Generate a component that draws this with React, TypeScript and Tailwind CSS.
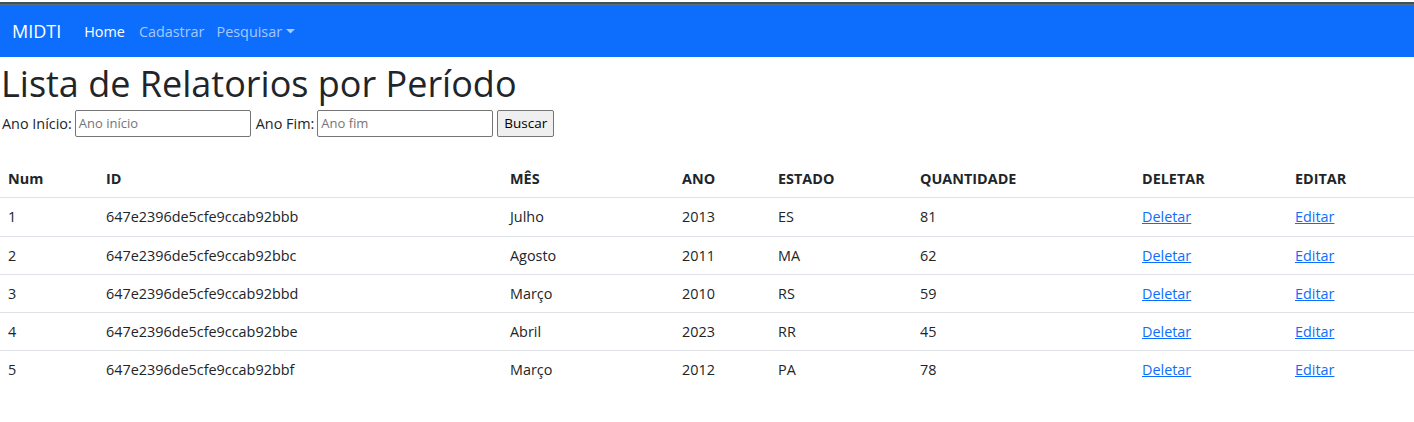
import React from "react";

const rows = [
  { n: 1, id: "647e2396de5cfe9ccab92bbb", mes: "Julho", ano: "2013", uf: "ES", q: "81" },
  { n: 2, id: "647e2396de5cfe9ccab92bbc", mes: "Agosto", ano: "2011", uf: "MA", q: "62" },
  { n: 3, id: "647e2396de5cfe9ccab92bbd", mes: "Março", ano: "2010", uf: "RS", q: "59" },
  { n: 4, id: "647e2396de5cfe9ccab92bbe", mes: "Abril", ano: "2023", uf: "RR", q: "45" },
  { n: 5, id: "647e2396de5cfe9ccab92bbf", mes: "Março", ano: "2012", uf: "PA", q: "78" },
];

const cols = "grid grid-cols-[98px_404px_172px_96px_142px_222px_153px_1fr]";

export default function App() {
  return (
    <div className="w-[1414px] h-[422px] bg-white text-[#212529] text-[14.4px] font-['Open_Sans',sans-serif] overflow-hidden">
      <div className="h-[2px] bg-white" />
      <div className="h-[2px] bg-[#3e5059]" />
      <div className="h-[1px] bg-[#5b6b78]" />
      <nav className="h-[52px] bg-[#0d6efd] flex items-center pl-[12px] pt-[1px]">
        <span className="text-white text-[18px] mr-[23px]">MIDTI</span>
        <span className="text-white mr-[14px]">Home</span>
        <span className="text-[#a6c8fe] mr-[12px]">Cadastrar</span>
        <span className="text-[#a6c8fe] flex items-center">
          Pesquisar
          <svg width="9" height="5" viewBox="0 0 9 5" className="ml-[4px]">
            <path d="M0 0h9L4.5 4.5z" fill="#a6c8fe" />
          </svg>
        </span>
      </nav>
      <h1 className="text-[36px] font-medium leading-[43px] pl-[1px] mt-[5px]">Lista de Relatorios por Período</h1>
      <div className="flex items-center h-[27px] mt-[5px] pl-[2px]">
        <span className="mr-[3px]">Ano Início:</span>
        <div className="w-[176px] h-[27px] border border-[#767676] rounded-[2px] px-[3px] flex items-center text-[#757575] text-[13px]">Ano início</div>
        <span className="ml-[5px] mr-[3px]">Ano Fim:</span>
        <div className="w-[176px] h-[27px] border border-[#767676] rounded-[2px] px-[3px] flex items-center text-[#757575] text-[13px]">Ano fim</div>
        <div className="ml-[4px] w-[57px] h-[27px] border border-[#767676] rounded-[2px] bg-[#efefef] flex items-center justify-center text-black text-[13.5px]">Buscar</div>
      </div>
      <div className="mt-[24px]">
        <div className={`${cols} h-[37px] items-center font-bold border-b border-[#dee2e6]`}>
          {["Num", "ID", "MÊS", "ANO", "ESTADO", "QUANTIDADE", "DELETAR", "EDITAR"].map((h) => (
            <div key={h} className="px-[8px]">{h}</div>
          ))}
        </div>
        {rows.map((r, i) => (
          <div key={r.n} className={`${cols} ${i === 0 ? "h-[39px]" : "h-[38px]"} items-center ${i < 4 ? "border-b border-[#dee2e6]" : ""}`}>
            <div className="px-[8px]">{r.n}</div>
            <div className="px-[8px]">{r.id}</div>
            <div className="px-[8px]">{r.mes}</div>
            <div className="px-[8px]">{r.ano}</div>
            <div className="px-[8px]">{r.uf}</div>
            <div className="px-[8px]">{r.q}</div>
            <div className="px-[8px]"><span className="text-[#0d6efd] underline">Deletar</span></div>
            <div className="px-[8px]"><span className="text-[#0d6efd] underline">Editar</span></div>
          </div>
        ))}
      </div>
    </div>
  );
}
